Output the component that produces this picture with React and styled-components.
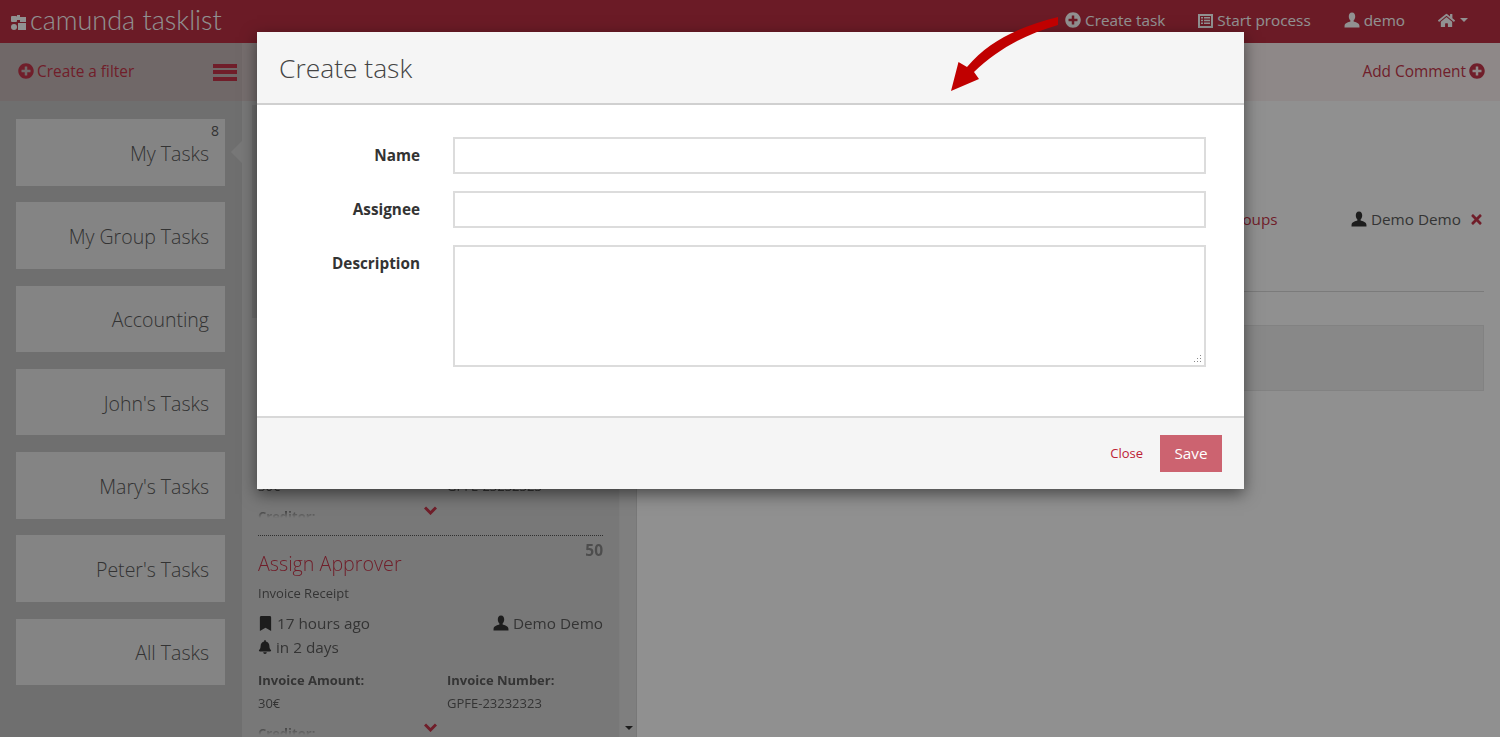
import React from 'react'
import styled, { createGlobalStyle } from 'styled-components'
import { FaPlusCircle, FaHome, FaBookmark, FaBell, FaTimes } from 'react-icons/fa'

const RED = '#c5364a'

const UserIcon = ({ size = 16 }) => (
  <svg width={size} height={size} viewBox="0 0 16 16" fill="currentColor">
    <path d="M8 .6C5.7.6 4.8 2.5 4.8 4.4c0 1.7.7 3.2 1.6 4v1.1C4.8 10.2 1 10.6.6 13.6L.5 15.4h15l-.1-1.8c-.4-3-4.2-3.4-5.8-4.1V8.4c.9-.8 1.6-2.3 1.6-4C11.2 2.5 10.3.6 8 .6z" />
  </svg>
)

const ListIcon = () => (
  <svg width="15" height="15" viewBox="0 0 15 15" fill="currentColor" fillRule="evenodd">
    <path d="M0 1h15v14H0zM2 3v10h11V3zM3 4h2v1.5H3zM6 4h6v1.5H6zM3 6.7h2v1.5H3zM6 6.7h6v1.5H6zM3 9.4h2v1.5H3zM6 9.4h6v1.5H6z" />
  </svg>
)

const ChevronIcon = () => (
  <svg width="13" height="9" viewBox="0 0 13 9" fill="none" stroke="currentColor" strokeWidth="3">
    <path d="M1 1.5 L6.5 7 L12 1.5" />
  </svg>
)

const Logo = () => (
  <svg width="15" height="15" viewBox="0 0 15 15" fill="currentColor">
    <rect x="0" y="1" width="6" height="6" rx="1" />
    <circle cx="3" cy="12" r="3" />
    <path d="M6 0h3v2h6v5H9V5H6z" />
    <path d="M7 8h8v7H7z" />
  </svg>
)

const filters = [
  { name: 'My Tasks', count: 8, active: true },
  { name: 'My Group Tasks' },
  { name: 'Accounting' },
  { name: "John's Tasks" },
  { name: "Mary's Tasks" },
  { name: "Peter's Tasks" },
  { name: 'All Tasks' },
]

const TaskCard = ({ first }) => (
  <Card $first={first}>
    <Clip>
      <Priority>50</Priority>
      <TaskTitle>Assign Approver</TaskTitle>
      <Process>Invoice Receipt</Process>
      <MetaRow>
        <span><FaBookmark size={15} /> 17 hours ago</span>
        <span><UserIcon /> Demo Demo</span>
      </MetaRow>
      <DueRow><FaBell size={14} /> in 2 days</DueRow>
      <Vars>
        <VarLabel>Invoice Amount:</VarLabel>
        <VarLabel>Invoice Number:</VarLabel>
        <VarValue>30€</VarValue>
        <VarValue>GPFE-23232323</VarValue>
        <VarLabel>Creditor:</VarLabel>
      </Vars>
    </Clip>
    <Expand><ChevronIcon /></Expand>
  </Card>
)

const App = () => {
  return (
    <Page>
      <GlobalStyle />
      <Header>
        <Brand><Logo /><BrandName>camunda tasklist</BrandName></Brand>
        <Nav>
          <NavItem><FaPlusCircle size={16} />Create task</NavItem>
          <NavItem><ListIcon />Start process</NavItem>
          <NavItem><UserIcon />demo</NavItem>
          <NavItem><FaHome size={17} /><Caret /></NavItem>
        </Nav>
      </Header>

      <Toolbar>
        <FilterTools>
          <ToolLink><FaPlusCircle size={16} />Create a filter</ToolLink>
          <Burger><i /><i /><i /></Burger>
        </FilterTools>
        <ListTools />
        <DetailTools>
          <ToolLink>Add Comment<FaPlusCircle size={16} /></ToolLink>
        </DetailTools>
      </Toolbar>

      <Columns>
        <Sidebar>
          {filters.map((f) => (
            <Tile key={f.name} $active={f.active}>
              {f.count && <Count>{f.count}</Count>}
              {f.name}
            </Tile>
          ))}
        </Sidebar>
        <ListColumn>
          <TaskList>
            <SearchPanel />
            <TaskCard first />
            <TaskCard />
          </TaskList>
          <Scrollbar><ScrollArrow /></Scrollbar>
        </ListColumn>
        <Detail>
          <AssignRow>
            <GroupsLink>Manage Groups</GroupsLink>
            <Assignee><UserIcon /> Demo Demo <RemoveIcon><FaTimes size={15} /></RemoveIcon></Assignee>
          </AssignRow>
          <Divider />
          <FormBox />
        </Detail>
      </Columns>

      <Backdrop />

      <Modal>
        <ModalHeader>Create task</ModalHeader>
        <ModalBody>
          <Label>Name</Label>
          <TextInput />
          <Label>Assignee</Label>
          <TextInput />
          <Label>Description</Label>
          <TextArea />
        </ModalBody>
        <ModalFooter>
          <CloseLink>Close</CloseLink>
          <SaveButton>Save</SaveButton>
        </ModalFooter>
      </Modal>

      <Arrow viewBox="0 0 107 75">
        <path d="M107 1 C75 9 40 22 16 51 L7.5 46 L0 75 L28 63 L23 56 C47 33 75 18 107 9 Z" />
      </Arrow>
    </Page>
  )
}

export default App

const GlobalStyle = createGlobalStyle`
  html, body {
    margin: 0;
    height: 100%;
    overflow: hidden;
  }
  * {
    box-sizing: border-box;
  }
  body {
    font-family: "Open Sans", "Liberation Sans", sans-serif;
    font-size: 15.3px;
    color: #5c5c5c;
  }
`

const Page = styled.div`
  position: relative;
  width: 100%;
  height: 737px;
  display: flex;
  flex-direction: column;
  overflow: hidden;
  background: #fff;
`

const Header = styled.header`
  height: 43px;
  flex: none;
  background: #bc3144;
  color: #fff;
  display: flex;
  align-items: center;
  justify-content: space-between;
  padding: 0 32px 3px 11px;
`

const Brand = styled.div`
  display: flex;
  align-items: center;
  gap: 4px;
  svg {
    margin-top: 5px;
  }
`

const BrandName = styled.span`
  font-family: Lato, sans-serif;
  font-size: 27px;
  font-weight: 300;
  line-height: 40px;
`

const Nav = styled.nav`
  display: flex;
  align-items: center;
  gap: 33px;
`

const NavItem = styled.a`
  display: flex;
  align-items: center;
  gap: 4px;
  font-size: 15.3px;
`

const Caret = styled.span`
  width: 0;
  height: 0;
  border-left: 4.5px solid transparent;
  border-right: 4.5px solid transparent;
  border-top: 4.5px solid #fff;
  margin-left: 1px;
`

const Toolbar = styled.div`
  height: 58px;
  flex: none;
  display: flex;
`

const FilterTools = styled.div`
  width: 242px;
  background: #c6b8b8;
  display: flex;
  align-items: center;
  justify-content: space-between;
  padding: 0 5px 2px 18px;
`

const ListTools = styled.div`
  width: 395px;
  background: #cfc2c2;
`

const DetailTools = styled.div`
  flex: 1;
  background: #f9efef;
  display: flex;
  align-items: center;
  justify-content: flex-end;
  padding: 0 15px 2px 0;
`

const ToolLink = styled.a`
  display: flex;
  align-items: center;
  gap: 3px;
  color: ${RED};
  font-size: 15.4px;
`

const Burger = styled.span`
  display: flex;
  flex-direction: column;
  gap: 2.5px;
  margin-top: 2px;
  i {
    display: block;
    width: 24px;
    height: 4px;
    background: ${RED};
  }
`

const Columns = styled.div`
  flex: 1;
  display: flex;
  min-height: 0;
`

const Sidebar = styled.aside`
  width: 242px;
  flex: none;
  background: #c4c4c4;
  padding: 18px 17px 0 16px;
  display: flex;
  flex-direction: column;
  gap: 16.7px;
`

const Tile = styled.div`
  position: relative;
  height: 66.6px;
  background: #e8e8e8;
  color: #5a5a5a;
  font-size: 19.5px;
  font-weight: 300;
  display: flex;
  align-items: center;
  justify-content: flex-end;
  padding: 2px 16px 0 0;

  ${(p) => p.$active && `
    &::after {
      content: '';
      position: absolute;
      right: -17px;
      top: 22px;
      border-top: 11px solid transparent;
      border-bottom: 11px solid transparent;
      border-right: 11px solid #d4d4d4;
    }
  `}
`

const Count = styled.span`
  position: absolute;
  top: 2px;
  right: 6px;
  font-size: 14px;
  font-weight: 400;
`

const ListColumn = styled.div`
  width: 395px;
  flex: none;
  display: flex;
  background: #d4d4d4;
`

const TaskList = styled.div`
  width: 377px;
  flex: none;
  padding: 4px 16px 0;
`

const SearchPanel = styled.div`
  height: 213px;
  margin-left: -6px;
  background: #c4c4c4;
`

const Card = styled.div`
  position: relative;
  height: 217px;
  border-top: ${(p) => (p.$first ? '1px solid transparent' : '1px dotted #555')};
`

const Clip = styled.div`
  height: 199px;
  overflow: hidden;
  mask-image: linear-gradient(#000 190px, transparent 199px);
`

const Priority = styled.div`
  float: right;
  margin-top: 4px;
  font-size: 15.5px;
  font-weight: 700;
  line-height: 20px;
  color: #888;
`

const TaskTitle = styled.div`
  margin-top: 14px;
  font-size: 19.7px;
  font-weight: 300;
  line-height: 28px;
  color: ${RED};
`

const Process = styled.div`
  margin-top: 6px;
  font-size: 13px;
  line-height: 18px;
`

const MetaRow = styled.div`
  margin-top: 10px;
  display: flex;
  justify-content: space-between;
  font-size: 15.3px;
  line-height: 22px;
  svg {
    vertical-align: -2px;
    color: #333;
  }
`

const DueRow = styled.div`
  margin-top: 2px;
  font-size: 15.3px;
  line-height: 22px;
  svg {
    vertical-align: -1px;
    color: #333;
  }
`

const Vars = styled.div`
  margin-top: 12px;
  display: grid;
  grid-template-columns: 189px 1fr;
  row-gap: 3px;
  font-size: 13px;
  line-height: 20px;
`

const VarLabel = styled.div`
  font-weight: 700;
`

const VarValue = styled.div`
  margin-bottom: 7px;
`

const Expand = styled.span`
  position: absolute;
  display: flex;
  left: 166px;
  top: 187px;
  color: ${RED};
`

const Scrollbar = styled.div`
  flex: 1;
  margin-right: 1px;
  border-left: 1px solid #dcdcdc;
  background: #e0e0e0;
  position: relative;
`

const ScrollArrow = styled.span`
  position: absolute;
  left: 5px;
  bottom: 7px;
  border-left: 4px solid transparent;
  border-right: 4px solid transparent;
  border-top: 4px solid #333;
`

const Detail = styled.main`
  flex: 1;
  min-width: 0;
  background: #fdfdfd;
  padding: 107px 16px 0 0;
`

const AssignRow = styled.div`
  display: flex;
  justify-content: space-between;
  align-items: center;
  height: 22px;
`

const GroupsLink = styled.a`
  margin-left: 527px;
  color: ${RED};
  font-size: 15.3px;
`

const Assignee = styled.div`
  display: flex;
  align-items: center;
  gap: 4px;
  font-size: 15.3px;
  svg {
    color: #333;
  }
`

const RemoveIcon = styled.span`
  display: flex;
  margin-left: 4px;
  svg {
    color: ${RED};
  }
`

const Divider = styled.div`
  height: 1px;
  margin-top: 61px;
  background: #d8d8d8;
`

const FormBox = styled.div`
  height: 66px;
  margin-top: 33px;
  background: #f0f0f0;
  border: 1px solid #e4e4e4;
`

const Backdrop = styled.div`
  position: absolute;
  inset: 0;
  background: rgba(0, 0, 0, 0.43);
`

const Modal = styled.div`
  position: absolute;
  left: 257px;
  top: 32px;
  width: 987px;
  height: 457px;
  background: #fff;
  box-shadow: 0 5px 15px rgba(0, 0, 0, 0.5);
  display: flex;
  flex-direction: column;
`

const ModalHeader = styled.h3`
  margin: 0;
  height: 73px;
  flex: none;
  padding-left: 22px;
  display: flex;
  align-items: center;
  background: #f5f5f5;
  border-bottom: 2px solid #d0d0d0;
  color: #444;
  font-size: 26.4px;
  font-weight: 300;
`

const ModalBody = styled.div`
  flex: 1;
  display: grid;
  grid-template-columns: 163px 753px;
  grid-auto-rows: min-content;
  column-gap: 33px;
  row-gap: 17px;
  padding: 32px 0 0 0;
`

const Label = styled.label`
  font-size: 15.3px;
  font-weight: 700;
  color: #333;
  text-align: right;
  line-height: 37px;
`

const TextInput = styled.input`
  height: 37px;
  border: 2px solid #dcdcdc;
  background: #fff;
  outline: none;
`

const TextArea = styled.textarea`
  height: 122px;
  border: 2px solid #dcdcdc;
  background: #fff;
  outline: none;

  &::-webkit-resizer {
    background-color: #fff;
    background-image:
      linear-gradient(#888, #888), linear-gradient(#888, #888), linear-gradient(#888, #888),
      linear-gradient(#888, #888), linear-gradient(#888, #888), linear-gradient(#888, #888);
    background-repeat: no-repeat;
    background-size: 1px 1px;
    background-position: 5px 11px, 8px 11px, 11px 11px, 8px 8px, 11px 8px, 11px 5px;
  }
`

const ModalFooter = styled.div`
  height: 73px;
  flex: none;
  background: #f5f5f5;
  border-top: 2px solid #d8d8d8;
  display: flex;
  align-items: center;
  justify-content: flex-end;
  gap: 17px;
  padding: 0 22px 0 0;
`

const CloseLink = styled.a`
  color: #bd2136;
  font-size: 13px;
  margin-top: -1px;
`

const SaveButton = styled.button`
  width: 62px;
  height: 37px;
  border: none;
  padding: 0 0 2px;
  background: #cc6370;
  color: #fff;
  font-family: inherit;
  font-size: 15.3px;
`

const Arrow = styled.svg`
  position: absolute;
  left: 951px;
  top: 16px;
  width: 107px;
  height: 75px;
  fill: #c00000;
`
